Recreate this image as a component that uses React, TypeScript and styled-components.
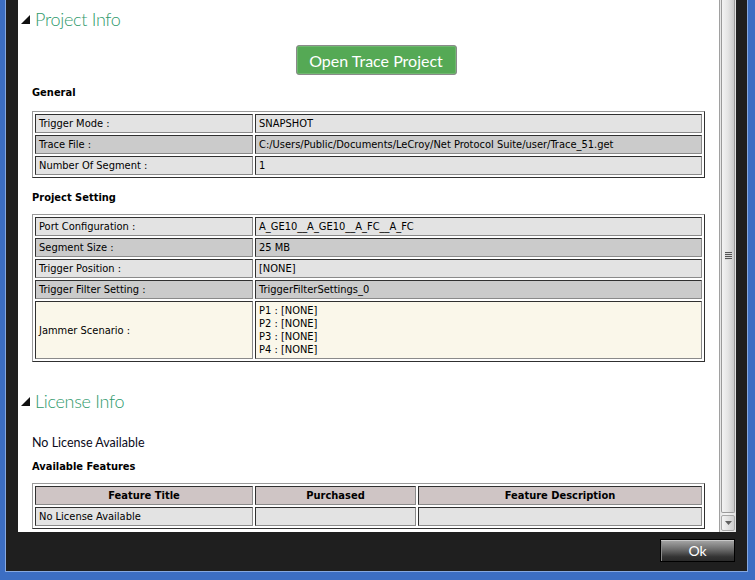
import React from "react";
import styled, { createGlobalStyle } from "styled-components";

const GlobalStyle = createGlobalStyle`
  html, body { margin: 0; padding: 0; background: #1f1f1f; }
  body { width: 755px; height: 580px; overflow: hidden; }
  * { box-sizing: border-box; }
`;

const Window = styled.div`
  width: 755px;
  height: 580px;
  background: #1f1f1f;
  border-left: 5px solid #3c6ec3;
  border-right: 7px solid #3c6ec3;
  border-bottom: 8px solid #3c6ec3;
  box-shadow: inset 1px 0 0 #86a8e0, inset -1px 0 0 #86a8e0, inset 0 -1px 0 #86a8e0;
  display: flex;
  flex-direction: column;
`;

const Body = styled.div`
  height: 532px;
  display: flex;
  padding: 0 12px 0 13px;
`;

const Panel = styled.div`
  flex: 1;
  background: #ffffff;
  overflow: hidden;
  padding: 0 14px;
  font-family: "DejaVu Sans Condensed", "Liberation Sans", sans-serif;
  color: #000;
`;

const Scrollbar = styled.div`
  width: 17px;
  background: linear-gradient(90deg, #e6e6e6, #f4f4f4 40%, #e0e0e0);
  border-left: 1px solid #a0a0a0;
  display: flex;
  flex-direction: column;
  padding: 0 1px 1px 1px;
  gap: 2px;
`;

const Thumb = styled.div`
  flex: 1;
  border: 1px solid #9a9a9a;
  border-top: none;
  border-radius: 0 0 2px 2px;
  background: linear-gradient(90deg, #f3f3f3, #e4e4e4 50%, #c9c9c9);
  display: flex;
  align-items: center;
  justify-content: center;
`;

const Grip = styled.div`
  width: 7px;
  height: 8px;
  background: repeating-linear-gradient(180deg, #555 0 1px, #d8d8d8 1px 2px);
`;

const ArrowBtn = styled.div`
  height: 16px;
  border: 1px solid #a8a8a8;
  border-radius: 2px;
  background: linear-gradient(90deg, #f4f4f4, #e2e2e2 50%, #cfcfcf);
  display: flex;
  align-items: center;
  justify-content: center;
`;

const Footer = styled.div`
  height: 40px;
  display: flex;
  justify-content: flex-end;
  align-items: flex-start;
  padding: 7px 13px 0 0;
`;

const OkButton = styled.button`
  width: 75px;
  height: 23px;
  border: 1px solid #000;
  box-shadow: inset 0 1px 0 #c8c8c8, inset 1px 0 0 #8a8a8a;
  background: linear-gradient(180deg, #a9a9a9 0%, #6c6c6c 45%, #333 80%, #2a2a2a 100%);
  color: #fff;
  font-family: "Lato", "Liberation Sans", sans-serif;
  font-size: 14px;
  padding: 0;
  line-height: 20px;
`;

const Heading = styled.div<{ $top: number }>`
  display: flex;
  align-items: center;
  gap: 5px;
  height: 26px;
  margin: ${(p) => p.$top}px 0 0 -11px;
`;

const HeadingText = styled.span`
  font-family: "Lato", "Open Sans", sans-serif;
  font-weight: 300;
  font-size: 18px;
  letter-spacing: -0.3px;
  color: #2f9a6c;
  line-height: 26px;
`;

const ButtonRow = styled.div`
  display: flex;
  justify-content: center;
  padding-left: 15px;
  margin-top: 13px;
`;

const GreenButton = styled.button`
  width: 161px;
  height: 30px;
  background: #55a955;
  border: 1px solid #8a8a8a;
  border-radius: 3px;
  box-shadow: inset 0 0 0 1px #6fb86f;
  color: #fff;
  font-family: "Lato", "Open Sans", sans-serif;
  font-size: 16px;
  padding: 0;
`;

const SubTitle = styled.div<{ $top: number }>`
  margin-top: ${(p) => p.$top}px;
  font-family: "DejaVu Sans Condensed", "Liberation Sans", sans-serif;
  font-weight: bold;
  font-size: 11px;
  line-height: 14px;
  height: 14px;
`;

const PlainText = styled.div<{ $top: number }>`
  margin-top: ${(p) => p.$top}px;
  font-family: "Lato", "Open Sans", sans-serif;
  font-size: 12.5px;
  line-height: 16px;
  height: 16px;
  color: #0a0a1a;
`;

const Table = styled.table<{ $top: number }>`
  margin-top: ${(p) => p.$top}px;
  width: 100%;
  table-layout: fixed;
  border-collapse: separate;
  border-spacing: 2px;
  border: 1px solid;
  border-color: #9a9a9a #303030 #303030 #9a9a9a;
  font-size: 11px;
`;

type Tone = "light" | "dark" | "cream" | "head";
const toneBg: Record<Tone, string> = {
  light: "#e3e3e3",
  dark: "#cbcbcb",
  cream: "#faf7ea",
  head: "#cfc5c5",
};

const Cell = styled.td<{ $tone: Tone }>`
  height: 19px;
  padding: 0 3px;
  border: 1px solid;
  border-color: #303030 #8a8a8a #8a8a8a #303030;
  background: ${(p) => toneBg[p.$tone]};
  white-space: nowrap;
  overflow: hidden;
  line-height: 13px;
  vertical-align: middle;
`;

const HeadCell = styled(Cell).attrs({ as: "th" })`
  font-weight: bold;
  text-align: center;
`;

const MultiLine = styled.div`
  padding: 2px 0;
  line-height: 13px;
`;

const Triangle = () => (
  <svg width="9" height="9" viewBox="0 0 9 9">
    <polygon points="9,0 9,9 0,9" fill="#111" />
  </svg>
);

const general: [string, string][] = [
  ["Trigger Mode :", "SNAPSHOT"],
  ["Trace File :", "C:/Users/Public/Documents/LeCroy/Net Protocol Suite/user/Trace_51.get"],
  ["Number Of Segment :", "1"],
];

const setting: [string, string][] = [
  ["Port Configuration :", "A_GE10__A_GE10__A_FC__A_FC"],
  ["Segment Size :", "25 MB"],
  ["Trigger Position :", "[NONE]"],
  ["Trigger Filter Setting :", "TriggerFilterSettings_0"],
];

export default function App() {
  return (
    <>
      <GlobalStyle />
      <Window>
        <Body>
          <Panel>
            <Heading $top={6}>
              <Triangle />
              <HeadingText>Project Info</HeadingText>
            </Heading>
            <ButtonRow>
              <GreenButton>Open Trace Project</GreenButton>
            </ButtonRow>
            <SubTitle $top={11}>General</SubTitle>
            <Table $top={11}>
              <colgroup>
                <col style={{ width: 218 }} />
                <col />
              </colgroup>
              <tbody>
                {general.map(([k, v], i) => (
                  <tr key={k}>
                    <Cell $tone={i % 2 ? "dark" : "light"}>{k}</Cell>
                    <Cell $tone={i % 2 ? "dark" : "light"}>{v}</Cell>
                  </tr>
                ))}
              </tbody>
            </Table>
            <SubTitle $top={13}>Project Setting</SubTitle>
            <Table $top={9}>
              <colgroup>
                <col style={{ width: 218 }} />
                <col />
              </colgroup>
              <tbody>
                {setting.map(([k, v], i) => (
                  <tr key={k}>
                    <Cell $tone={i % 2 ? "dark" : "light"}>{k}</Cell>
                    <Cell $tone={i % 2 ? "dark" : "light"}>{v}</Cell>
                  </tr>
                ))}
                <tr>
                  <Cell $tone="cream">Jammer Scenario :</Cell>
                  <Cell $tone="cream">
                    <MultiLine>
                      P1 : [NONE]
                      <br />
                      P2 : [NONE]
                      <br />
                      P3 : [NONE]
                      <br />
                      P4 : [NONE]
                    </MultiLine>
                  </Cell>
                </tr>
              </tbody>
            </Table>
            <Heading $top={26}>
              <Triangle />
              <HeadingText>License Info</HeadingText>
            </Heading>
            <PlainText $top={21}>No License Available</PlainText>
            <SubTitle $top={9}>Available Features</SubTitle>
            <Table $top={9}>
              <colgroup>
                <col style={{ width: 218 }} />
                <col style={{ width: 161 }} />
                <col />
              </colgroup>
              <tbody>
                <tr>
                  <HeadCell $tone="head">Feature Title</HeadCell>
                  <HeadCell $tone="head">Purchased</HeadCell>
                  <HeadCell $tone="head">Feature Description</HeadCell>
                </tr>
                <tr>
                  <Cell $tone="light">No License Available</Cell>
                  <Cell $tone="light"></Cell>
                  <Cell $tone="light"></Cell>
                </tr>
              </tbody>
            </Table>
          </Panel>
          <Scrollbar>
            <Thumb>
              <Grip />
            </Thumb>
            <ArrowBtn>
              <svg width="7" height="4" viewBox="0 0 7 4">
                <polygon points="0,0 7,0 3.5,4" fill="#606060" />
              </svg>
            </ArrowBtn>
          </Scrollbar>
        </Body>
        <Footer>
          <OkButton>Ok</OkButton>
        </Footer>
      </Window>
    </>
  );
}
